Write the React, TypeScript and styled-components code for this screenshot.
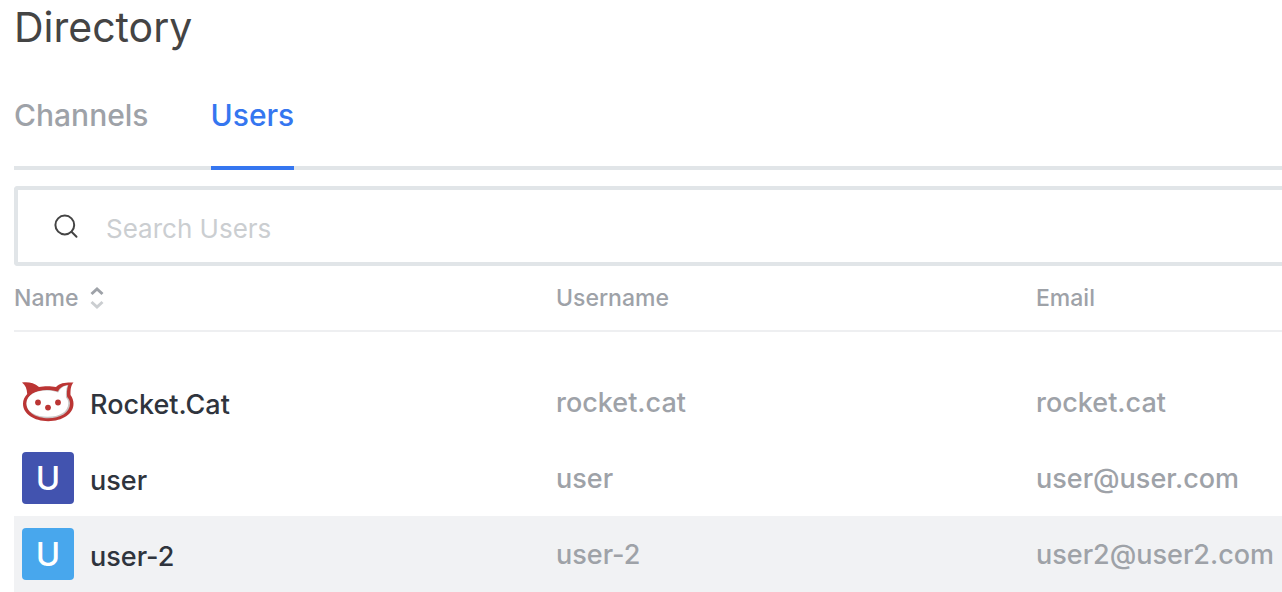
import React from "react";
import styled, { createGlobalStyle } from "styled-components";

const GlobalStyle = createGlobalStyle`
  *, *::before, *::after { box-sizing: border-box; }
  body {
    margin: 0;
    background: #ffffff;
    color: #2f343d;
    font-family: Inter, "Liberation Sans", sans-serif;
    overflow-x: hidden;
  }
`;

const Page = styled.main`
  padding-left: 14px;
`;

const Title = styled.h1`
  margin: 0;
  font-size: 41px;
  line-height: 54px;
  font-weight: 400;
  color: #444444;
`;

const Tabs = styled.nav`
  display: flex;
  gap: 62px;
  margin-top: 26px;
  box-shadow: inset 0 -4px 0 #e1e5e8;
`;

const Tab = styled.button<{ $active?: boolean }>`
  height: 90px;
  padding: 0 0 16px;
  border: 0;
  border-bottom: 4px solid ${({ $active }) => ($active ? "#3576f0" : "transparent")};
  background: none;
  font: inherit;
  font-size: 30px;
  font-weight: 500;
  color: ${({ $active }) => ($active ? "#3576f0" : "#9ea2a8")};
`;

const SearchBox = styled.label`
  display: flex;
  align-items: center;
  gap: 26px;
  height: 80px;
  margin-top: 16px;
  padding-left: 34px;
  border: 4px solid #e1e5e8;
  border-right: 0;
  border-radius: 4px 0 0 4px;
`;

const SearchInput = styled.input`
  flex: 1;
  min-width: 0;
  height: 72px;
  padding: 4px 0 0;
  border: 0;
  outline: 0;
  background: none;
  font: inherit;
  font-size: 26px;
  color: #2f343d;
  &::placeholder {
    color: #cbced1;
    opacity: 1;
  }
`;

const Table = styled.table`
  width: 100%;
  table-layout: fixed;
  border-collapse: separate;
  border-spacing: 0;
  text-align: left;
`;

const Body = styled.tbody`
  &::before {
    content: "";
    display: table-row;
    height: 32px;
  }
`;

const Heading = styled.th<{ $width?: number }>`
  width: ${({ $width }) => ($width ? `${$width}px` : "auto")};
  height: 66px;
  padding: 0;
  border-bottom: 2px solid #eeeff1;
  font-size: 23px;
  font-weight: 500;
  color: #9ea2a8;
`;

const SortButton = styled.button`
  display: flex;
  align-items: center;
  gap: 12px;
  padding: 0;
  border: 0;
  background: none;
  font: inherit;
  color: inherit;
`;

const Row = styled.tr<{ $highlighted?: boolean }>`
  height: 76px;
  background: ${({ $highlighted }) => ($highlighted ? "#f1f2f4" : "transparent")};
`;

const Cell = styled.td`
  padding: 0;
  font-size: 27px;
  font-weight: 500;
  color: #9ea2a8;
  white-space: nowrap;
`;

const Person = styled.div`
  display: flex;
  align-items: center;
  gap: 16px;
  padding-left: 8px;
`;

const Name = styled.span`
  padding-top: 4px;
  color: #2f343d;
`;

const Avatar = styled.span<{ $color: string }>`
  display: grid;
  place-items: center;
  width: 52px;
  height: 52px;
  border-radius: 4px;
  background: ${({ $color }) => $color};
  font-size: 33px;
  color: #ffffff;
`;

const CatAvatar = () => (
  <svg width="52" height="52" viewBox="0 0 52 52" aria-hidden="true">
    <path
      fill="#bb3534"
      d="M0 6.500C5.500 5.800 12 6.300 17 11C22 10 29 10 34 11C38 6.600 44 6.300 51.500 6.500C48.500 10 48.500 14 48.500 19C50.500 21.600 51.500 24.500 51.500 27.800C51.500 38 40.500 45.200 26.200 45.200C12 45.200 1 38 1 27.800C1 24 2.600 20.700 5.200 18C5 13 3.500 9 0 6.500Z"
    />
    <path
      fill="#c9c5c5"
      d="M4.500 27.500C4.500 19 14 14 25 14C29 14 33 14.600 36 15.600C37.500 12 41 9.500 46.300 9C44.700 13 44.700 18 45.200 21C47 23 48 25 48 27.500C48 37 38 42.200 26.200 42.200C14.500 42.200 4.500 36.500 4.500 27.500Z"
    />
    <path
      fill="#ffffff"
      d="M4.500 27.500C4.500 19 14 14.500 25 14.500C29 14.500 33 15.200 36.200 16.500C37.800 12.800 41 10.200 45.500 9.500C43.800 13 43.800 18 44 21.500C45.800 23.500 46.300 25 46.300 27.200C46.300 36 37.500 40.800 25.500 40.800C14 40.800 4.500 36 4.500 27.500Z"
    />
    <g fill="#bb3534">
      <circle cx="16" cy="26.500" r="2.900" />
      <circle cx="36" cy="26.500" r="2.900" />
      <circle cx="26" cy="31.600" r="2.900" />
    </g>
  </svg>
);

const SearchIcon = () => (
  <svg width="28" height="28" viewBox="0 0 28 28" fill="none" stroke="#444444" strokeWidth="2" strokeLinecap="round" aria-hidden="true">
    <circle cx="12.800" cy="13" r="9.400" />
    <path d="M19.500 19.800L24.500 24.700" />
  </svg>
);

const SortIcon = () => (
  <svg width="14" height="24" viewBox="0 0 14 24" fill="none" strokeWidth="3" aria-hidden="true">
    <path stroke="#9ea2a8" d="M1.500 8L7 3L12.500 8" />
    <path stroke="#cbced1" d="M1.500 16L7 21L12.500 16" />
  </svg>
);

type User = { name: string; username: string; email: string; color?: string };

const users: User[] = [
  { name: "Rocket.Cat", username: "rocket.cat", email: "rocket.cat" },
  { name: "user", username: "user", email: "user@user.com", color: "#4253af" },
  { name: "user-2", username: "user-2", email: "user2@user2.com", color: "#48a7ed" },
];

export default function App() {
  return (
    <>
      <GlobalStyle />
      <Page>
        <Title>Directory</Title>
        <Tabs aria-label="Directory sections">
          <Tab type="button">Channels</Tab>
          <Tab type="button" $active aria-current="page">Users</Tab>
        </Tabs>
        <SearchBox>
          <SearchIcon />
          <SearchInput type="text" placeholder="Search Users" />
        </SearchBox>
        <Table>
          <thead>
            <tr>
              <Heading $width={542} scope="col">
                <SortButton type="button">
                  Name
                  <SortIcon />
                </SortButton>
              </Heading>
              <Heading $width={480} scope="col">Username</Heading>
              <Heading scope="col">Email</Heading>
            </tr>
          </thead>
          <Body>
            {users.map((user) => (
              <Row key={user.name} $highlighted={user.name === "user-2"}>
                <Cell>
                  <Person>
                    {user.color ? <Avatar $color={user.color}>U</Avatar> : <CatAvatar />}
                    <Name>{user.name}</Name>
                  </Person>
                </Cell>
                <Cell>{user.username}</Cell>
                <Cell>{user.email}</Cell>
              </Row>
            ))}
          </Body>
        </Table>
      </Page>
    </>
  );
}
